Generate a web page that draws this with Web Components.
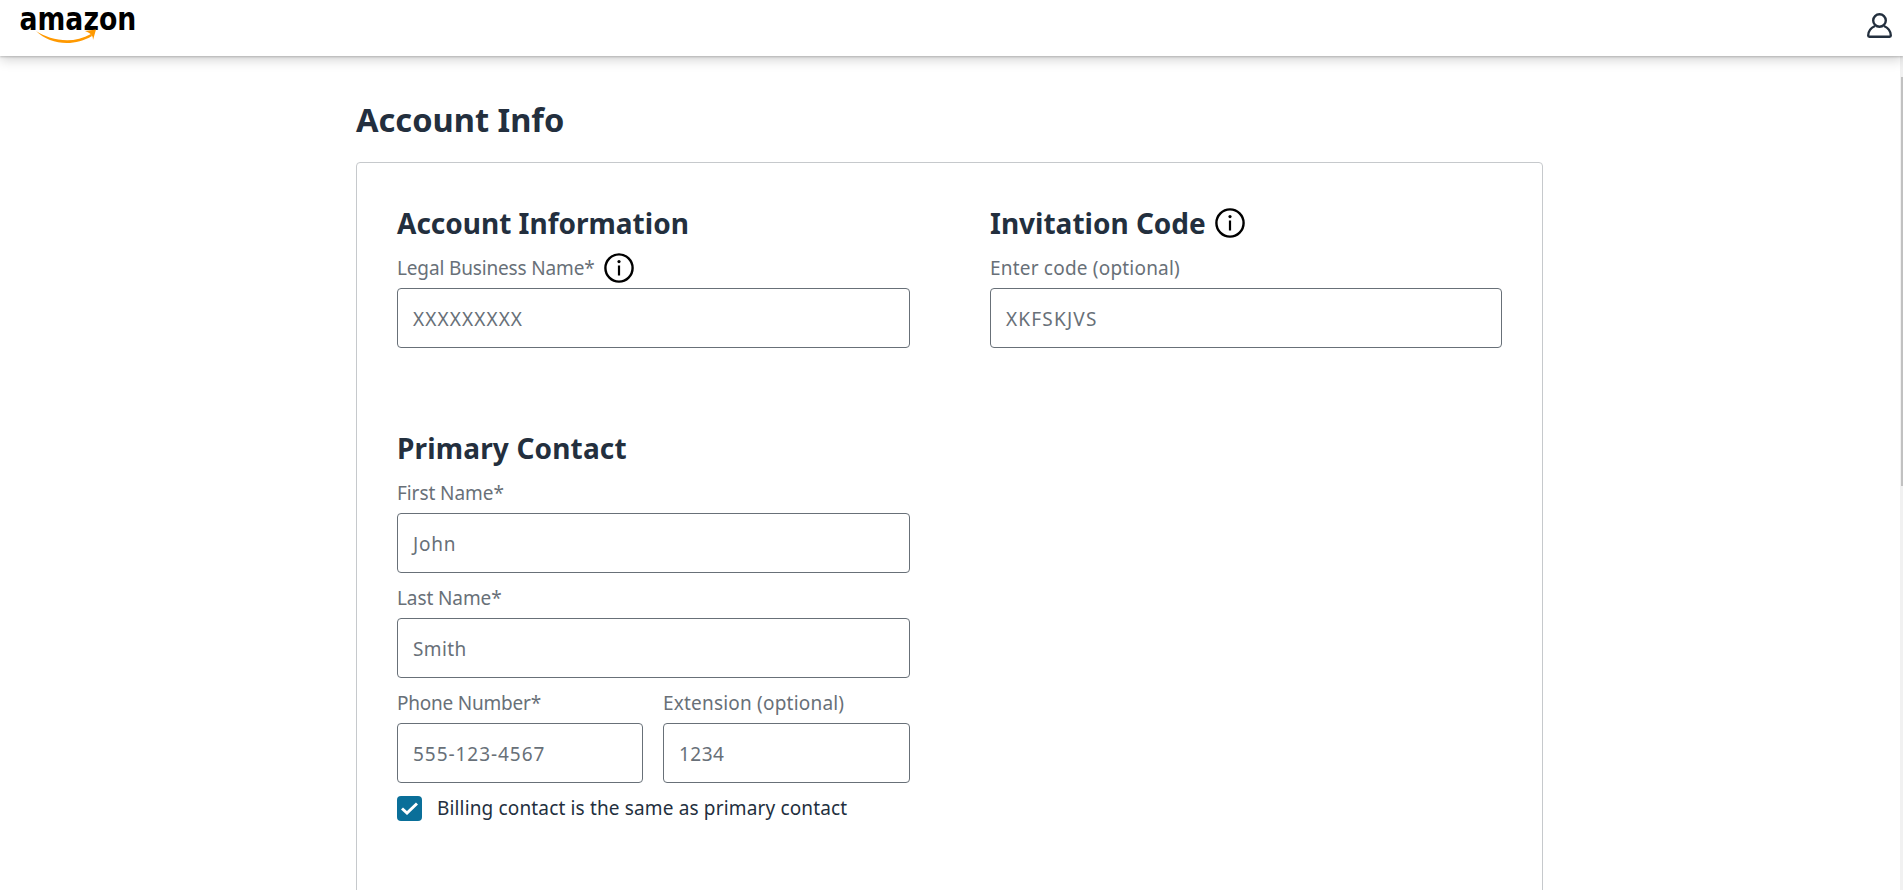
<!DOCTYPE html>
<html>
<head>
<meta charset="utf-8">
<title>Account Info</title>
<style>
  html, body { margin: 0; padding: 0; height: 100%; overflow: hidden; background: #fff; }
  body { font-family: "Noto Sans", sans-serif; color: #232f3e; }
</style>
</head>
<body>
<app-header></app-header>
<page-scroll></page-scroll>
<account-page>
  <form-section slot="left" heading="Account Information">
    <form-field label="Legal Business Name*" value="XXXXXXXXX" info style="--label-ls:-0.15px;--value-ls:1.1px"></form-field>
  </form-section>
  <form-section slot="right" heading="Invitation Code" info>
    <form-field label="Enter code (optional)" value="XKFSKJVS" style="--label-ls:0.2px;--value-ls:1.2px"></form-field>
  </form-section>
  <form-section slot="contact" heading="Primary Contact" style="--heading-ls:0.16px">
    <form-field label="First Name*" value="John" style="--label-ls:-0.07px;--value-ls:0.75px"></form-field>
    <form-field label="Last Name*" value="Smith" style="--label-ls:-0.1px;--value-ls:0.4px"></form-field>
    <div style="display:grid;grid-template-columns:246px 247px;column-gap:20px">
      <form-field label="Phone Number*" value="555-123-4567" style="--label-ls:-0.22px;--value-ls:0.95px"></form-field>
      <form-field label="Extension (optional)" value="1234" style="--label-ls:0.2px;--value-ls:0.45px"></form-field>
    </div>
    <check-box>Billing contact is the same as primary contact</check-box>
  </form-section>
</account-page>
<script>
const infoIcon = `<svg width="30" height="30" viewBox="0 0 30 30" fill="none">
  <circle cx="15" cy="15" r="13.6" stroke="#000" stroke-width="2.4"/>
  <rect x="13.9" y="12.5" width="2.2" height="10" fill="#000"/>
  <circle cx="15" cy="8.6" r="1.6" fill="#000"/>
</svg>`;

class AppHeader extends HTMLElement {
  constructor() {
    super();
    this.root = this.attachShadow({ mode: 'open' });
  }
  connectedCallback() {
    this.root.innerHTML = `
    <style>
      :host {
        display: flex;
        justify-content: space-between;
        height: 56px;
        background: #fff;
        box-shadow: 0 1px 2px rgba(0, 0, 0, 0.2), 0 3px 12px rgba(0, 0, 0, 0.2);
        position: relative;
        z-index: 2;
      }
      .logo { display: block; margin-left: 19px; overflow: visible; }
      .logo text {
        font-family: "DejaVu Sans", sans-serif;
        font-weight: 700;
        font-size: 32px;
        fill: #000;
      }
      .user { margin: 13px 11px 0 0; }
    </style>
    <svg class="logo" width="116" height="44" viewBox="19 0 116 44">
      <text transform="translate(19.5 30) scale(.835 1)">amazon</text>
      <path d="M36 31 C50 40 72 45 91 34 L92 36 C74 47 50 45 36 31Z" fill="#ff9900"/>
      <path d="M85 31 L96 29.5 L93 40 C93 36 92 34 85 31Z" fill="#ff9900"/>
    </svg>
    <svg class="user" width="25" height="25" viewBox="0 0 25 25" fill="none" stroke="#232f3e" stroke-width="2.4">
      <circle cx="12.5" cy="7.5" r="6.3"/>
      <path d="M8 13 C3.5 15 1.2 18.5 1.2 22.6 a1.2 1.2 0 0 0 1.2 1.2 H22.6 a1.2 1.2 0 0 0 1.2-1.2 C23.8 18.5 21.5 15 17 13"/>
    </svg>`;
  }
}

class PageScroll extends HTMLElement {
  constructor() {
    super();
    this.root = this.attachShadow({ mode: 'open' });
  }
  connectedCallback() {
    this.root.innerHTML = `
    <style>
      :host {
        position: absolute;
        top: 56px;
        right: 0;
        bottom: 0;
        width: 3px;
        background: #f1f1f1;
      }
      .thumb {
        margin: 21px 0 0 1px;
        height: 409px;
        background: #c1c1c1;
      }
    </style>
    <div class="thumb"></div>`;
  }
}

class AccountPage extends HTMLElement {
  constructor() {
    super();
    this.root = this.attachShadow({ mode: 'open' });
  }
  connectedCallback() {
    this.root.innerHTML = `
    <style>
      :host { display: block; width: 1187px; margin-left: 356px; padding-top: 45px; }
      h1 {
        margin: 0 0 23px;
        font-size: 32.6px;
        line-height: 38px;
        font-weight: 700;
        color: #232f3e;
      }
      .card {
        border: 1px solid #c6c9cc;
        border-radius: 4px;
        padding: 43px 40px 40px;
        height: 900px;
        box-sizing: border-box;
        display: grid;
        grid-template-columns: 513px 512px;
        column-gap: 80px;
        row-gap: 83px;
        align-content: start;
      }
      .wide { grid-column: 1; }
    </style>
    <h1>Account Info</h1>
    <div class="card">
      <slot name="left"></slot>
      <slot name="right"></slot>
      <div class="wide"><slot name="contact"></slot></div>
    </div>`;
  }
}

class FormSection extends HTMLElement {
  constructor() {
    super();
    this.root = this.attachShadow({ mode: 'open' });
  }
  connectedCallback() {
    const icon = this.hasAttribute('info') ? infoIcon : '';
    this.root.innerHTML = `
    <style>
      :host { display: block; }
      h2 {
        margin: 0 0 13px;
        height: 34px;
        display: flex;
        align-items: center;
        gap: 9px;
        font-size: 28px;
        line-height: 34px;
        font-weight: 700;
        letter-spacing: var(--heading-ls, 0);
        color: #232f3e;
      }
      svg { display: block; }
      .body { display: flex; flex-direction: column; gap: 10px; }
    </style>
    <h2>${this.getAttribute('heading')}${icon}</h2>
    <div class="body"><slot></slot></div>`;
  }
}

class FormField extends HTMLElement {
  constructor() {
    super();
    this.root = this.attachShadow({ mode: 'open' });
  }
  connectedCallback() {
    const icon = this.hasAttribute('info') ? infoIcon : '';
    this.root.innerHTML = `
    <style>
      :host { display: block; }
      .label {
        display: flex;
        align-items: center;
        gap: 9px;
        height: 30px;
        margin-bottom: 5px;
        font-size: 19px;
        letter-spacing: var(--label-ls, 0.15px);
        color: #687078;
      }
      .input {
        box-sizing: border-box;
        height: 60px;
        border: 1px solid #687078;
        border-radius: 4px;
        padding: 2px 15px 0;
        display: flex;
        align-items: center;
        font-size: 19px;
        letter-spacing: var(--value-ls, 0.15px);
        color: #687078;
      }
      svg { display: block; }
    </style>
    <div class="label">${this.getAttribute('label')}${icon}</div>
    <div class="input">${this.getAttribute('value')}</div>`;
  }
}

class CheckBox extends HTMLElement {
  constructor() {
    super();
    this.root = this.attachShadow({ mode: 'open' });
  }
  connectedCallback() {
    this.root.innerHTML = `
    <style>
      :host {
        display: flex;
        align-items: center;
        gap: 15px;
        height: 25px;
        margin-top: 2.5px;
        font-size: 19px;
        letter-spacing: 0.15px;
        color: #232f3e;
      }
      .box {
        width: 25px;
        height: 25px;
        border-radius: 4px;
        background: #0a6f99;
        display: flex;
        align-items: center;
        justify-content: center;
      }
    </style>
    <span class="box">
      <svg width="17" height="13" viewBox="0 0 17 13" fill="none">
        <path d="M1 6.5 L6 11 L16 1.5" stroke="#fff" stroke-width="3"/>
      </svg>
    </span>
    <span><slot></slot></span>`;
  }
}

customElements.define('app-header', AppHeader);
customElements.define('page-scroll', PageScroll);
customElements.define('account-page', AccountPage);
customElements.define('form-section', FormSection);
customElements.define('form-field', FormField);
customElements.define('check-box', CheckBox);
</script>
</body>
</html>
